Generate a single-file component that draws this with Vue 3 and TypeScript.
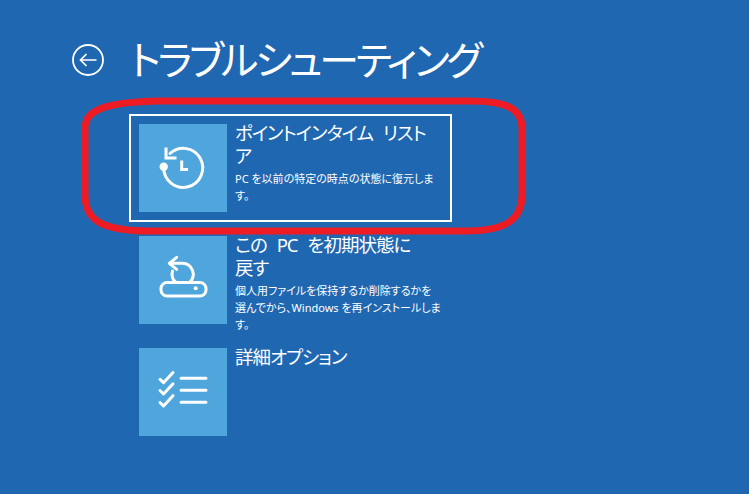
<script setup lang="ts">
interface Option {
  id: string
  title: string[]
  desc: string[]
  selected: boolean
}
const options: Option[] = [
  { id: 'restore', title: ['ポイントインタイム リスト', 'ア'], desc: ['PC を以前の特定の時点の状態に復元しま', 'す。'], selected: true },
  { id: 'reset', title: ['この PC を初期状態に', '戻す'], desc: ['個人用ファイルを保持するか削除するかを', '選んでから、Windows を再インストールしま', 'す。'], selected: false },
  { id: 'advanced', title: ['詳細オプション'], desc: [], selected: false },
]
</script>

<template>
  <div class="page">
    <header class="header">
      <svg class="back" viewBox="0 0 32 32" aria-label="戻る">
        <circle cx="16" cy="16" r="15" fill="none" stroke="#fff" stroke-width="1.8" />
        <path d="M24.5 16H8.5M14.5 10L8.5 16L14.5 22" fill="none" stroke="#fff" stroke-width="1.7" />
      </svg>
      <h1 class="title">トラブルシューティング</h1>
    </header>

    <div class="list">
      <div v-for="o in options" :key="o.id" class="row" :class="{ selected: o.selected }">
        <div class="tile">
          <svg viewBox="0 0 88 88" class="icon">
            <g v-if="o.id === 'restore'" fill="none" stroke="#fff" stroke-width="3" stroke-linecap="round" stroke-linejoin="round">
              <path d="M24.7 44A19.5 19.5 0 1 0 31 29.5" />
              <path d="M27 23.5V34H37.5" stroke-linecap="butt" stroke-linejoin="miter" />
              <path d="M42.7 36.5V45.5H49" stroke-linecap="butt" stroke-linejoin="miter" />
              <circle cx="24.7" cy="42.7" r="4.2" fill="#fff" stroke="none" />
            </g>
            <g v-else-if="o.id === 'reset'" fill="none" stroke="#fff" stroke-width="3" stroke-linecap="round" stroke-linejoin="round">
              <rect x="22" y="46.5" width="45" height="13.5" rx="6" />
              <path d="M37.7 21.3L30.3 27.3L37.7 33.3M30.3 27.3H43A11 11 0 0 1 50.5 46.5" />
              <path d="M33.5 35A11 11 0 0 0 37 46.5" />
              <circle cx="56.7" cy="52.3" r="2" fill="#fff" stroke="none" />
            </g>
            <g v-else fill="none" stroke="#fff" stroke-width="3" stroke-linecap="round" stroke-linejoin="round">
              <path d="M21 31.3L24.5 34.7L34 24.5M21 42.5L24.5 46L34 35.8M21 54.5L24.5 58L34 47.7" />
              <path d="M42 30.3H67M42 42.3H67M42 54.3H67" />
            </g>
          </svg>
        </div>
        <div class="text">
          <div class="name"><div v-for="l in o.title" :key="l">{{ l }}</div></div>
          <div class="desc"><div v-for="l in o.desc" :key="l">{{ l }}</div></div>
        </div>
      </div>
    </div>

    <svg class="marker" viewBox="0 0 749 494">
      <path
        d="M160 101H470C505 101 522 108 522 128V195C522 220 505 231 465 231H150C105 231 85 222 85 195V128C85 110 105 102 160 101Z"
        fill="none"
        stroke="#ed1c24"
        stroke-width="7"
      />
    </svg>
  </div>
</template>

<style>
html, body { margin: 0; }
</style>

<style scoped>
.page {
  position: relative;
  width: 749px;
  height: 494px;
  overflow: hidden;
  background: #2067b2;
  color: #fff;
  font-family: "Noto Sans", "Noto Sans CJK JP", sans-serif;
  font-feature-settings: "palt";
}
.header {
  display: flex;
  align-items: center;
  height: 52px;
  padding: 34px 0 0 72px;
  gap: 26px;
}
.back { width: 32px; height: 32px; flex: none; }
.title {
  margin: 0;
  font-size: 40px;
  font-weight: 400;
  letter-spacing: -3.2px;
  line-height: 52px;
  white-space: nowrap;
}
.list {
  display: flex;
  flex-direction: column;
  gap: 4px;
  margin: 28px 0 0 129px;
}
.row {
  box-sizing: border-box;
  display: flex;
  gap: 8px;
  width: 323px;
  height: 108px;
  padding: 8px;
  border: 2px solid transparent;
}
.row.selected { border-color: #fff; }
.tile {
  width: 88px;
  height: 88px;
  flex: none;
  background: #4ea6dc;
}
.icon { display: block; width: 88px; height: 88px; }
.text { margin-top: -3px; white-space: nowrap; }
.name { font-size: 18.5px; font-weight: 400; line-height: 23px; letter-spacing: -1px; word-spacing: 6px; }
.desc { margin-top: 3px; font-size: 11px; line-height: 17px; }
.marker {
  position: absolute;
  inset: 0;
  width: 749px;
  height: 494px;
  pointer-events: none;
}
</style>
